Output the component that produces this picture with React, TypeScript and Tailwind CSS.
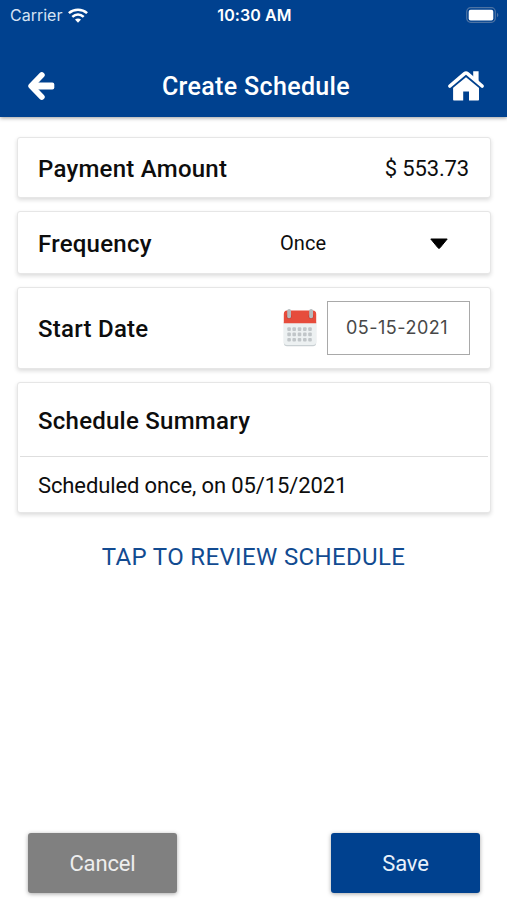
import type { ReactNode } from "react";

function Card({ className, children }: { className: string; children: ReactNode }) {
  return (
    <section
      className={`rounded-[3px] border border-[#e6e6e6] bg-white shadow-[0_2px_4px_rgba(0,0,0,0.14)] ${className}`}
    >
      {children}
    </section>
  );
}

function Label({ children }: { children: ReactNode }) {
  return <h2 className="pt-[2px] text-[24px] font-medium leading-7 tracking-[0.25px]">{children}</h2>;
}

function WifiIcon() {
  return (
    <svg width="20" height="15" viewBox="0 0 20 15" fill="none" stroke="white" strokeWidth="2.6">
      <path d="M.9 5.1C6 .6 14 .6 19.1 5.1" />
      <path d="M4.3 8.9c3.4-3 8-3 11.4 0" />
      <path d="M7 11.6c1.8-1.5 4.2-1.5 6 0L10 14.8z" fill="white" stroke="none" />
    </svg>
  );
}

function BatteryIcon() {
  return (
    <svg width="33" height="16" viewBox="0 0 33 16">
      <rect x=".7" y=".7" width="28.6" height="14.6" rx="4" fill="none" stroke="#4d73a3" strokeWidth="1.2" />
      <rect x="2.7" y="2.8" width="24.6" height="10.6" rx="2" fill="white" />
      <path d="M31 5.8c1.8.8 1.8 3.6 0 4.4z" fill="#4d73a3" />
    </svg>
  );
}

function BackIcon() {
  return (
    <svg width="28" height="30" viewBox="0 0 28 30" fill="white">
      <path d="M14.8 4 4.2 15l10.6 11" fill="none" stroke="white" strokeWidth="5.8" strokeLinecap="round" strokeLinejoin="round" />
      <path d="M5 15 11 9v12z" />
      <rect x="5" y="11.4" width="22.3" height="7.2" rx="2" />
    </svg>
  );
}

function HomeIcon() {
  return (
    <svg width="38" height="32" viewBox="0 0 38 32">
      <path d="M6.1 16 19 5.5 32 16v13.4c0 .8-.4 1.1-1.1 1.1h-8.9v-9h-5.8v9H7.2c-.7 0-1.1-.4-1.1-1.1z" fill="white" />
      <path d="M2.6 17 19 3.6 35.4 17" fill="none" stroke="#00418f" strokeWidth="5.6" />
      <path d="M26.2 1.3h5.4v12l-5.4-4.4z" fill="white" />
      <path d="M2.9 16 17.5 3.6c1-.8 2-.8 3 0L35.1 16" fill="none" stroke="white" strokeWidth="3.6" strokeLinecap="round" />
    </svg>
  );
}

const dotColumns = [6.1, 11.2, 16.5, 21.8, 27];
const dotRows = [20.1, 25.4, 30.7];

function CalendarIcon() {
  return (
    <svg width="34" height="38" viewBox="0 0 34 38">
      <path d="M.8 13h32.4v21c0 2-1.2 3.3-3.2 3.3H4C2 37.3.8 36 .8 34z" fill="#c9d0d3" />
      <path d="M.8 13h32.4v20c0 2-1.2 3-3.2 3H4c-2 0-3.2-1-3.2-3z" fill="#edf1f2" />
      <path d="M.8 14.3V5c0-2 1.2-3.4 3.2-3.4h26c2 0 3.2 1.4 3.2 3.4v9.3z" fill="#e64c3c" />
      <g fill="#bd3b32">
        <circle cx="6" cy="7.3" r="2.5" />
        <circle cx="28" cy="7.3" r="2.5" />
      </g>
      <g fill="#b4bbbd">
        <rect x="4.2" y=".1" width="3.8" height="9.2" rx="1.9" />
        <rect x="26.2" y=".1" width="3.8" height="9.2" rx="1.9" />
      </g>
      <g fill="#c1c6c9">
        {dotRows.map((y) =>
          dotColumns.map((x) => <rect key={`${x}-${y}`} x={x - 1.8} y={y - 1.8} width="3.6" height="3.6" rx="1" />)
        )}
      </g>
    </svg>
  );
}

function App() {
  return (
    <div className="flex h-[900px] w-[507px] flex-col bg-white font-[Roboto,sans-serif] text-[#0d0d0d]">
      <header className="h-[117px] shrink-0 bg-[#00418f] text-white shadow-[0_1px_4px_rgba(0,0,0,0.4)]">
        <div className="grid h-[30px] grid-cols-3 items-center pl-[10px] pr-[8px] font-[Inter,sans-serif]">
          <div className="flex items-center gap-[6px]">
            <span className="text-[16px] leading-5 text-[#d5e3f4]">Carrier</span>
            <WifiIcon />
          </div>
          <span className="text-center text-[16px] font-semibold leading-5 tracking-[0.1px]">10:30 AM</span>
          <div className="flex justify-end">
            <BatteryIcon />
          </div>
        </div>
        <div className="flex h-[87px] items-center justify-between pl-[27px] pr-[22px] pt-[25px]">
          <button aria-label="Back">
            <BackIcon />
          </button>
          <h1 className="pl-[10px] pt-[2px] text-[25px] font-medium leading-8 tracking-[0.35px]">Create Schedule</h1>
          <button aria-label="Home">
            <HomeIcon />
          </button>
        </div>
      </header>

      <main className="flex flex-col gap-[13px] pl-[17px] pr-[16px] pt-[20px]">
        <Card className="flex h-[61px] items-center justify-between pl-[20px] pr-[21px]">
          <Label>Payment Amount</Label>
          <span className="pt-[2px] text-[22px] tracking-[-0.15px]">$ 553.73</span>
        </Card>

        <Card className="flex h-[63px] items-center pl-[20px] pr-[42px]">
          <Label>Frequency</Label>
          <button className="ml-auto flex w-[168px] items-center justify-between text-[20px] tracking-[0.1px]">
            Once
            <svg className="mt-[2px]" width="18" height="11" viewBox="0 0 18 11">
              <path d="M.8 1h16.4L10 9.8c-.6.7-1.4.7-2 0z" fill="black" stroke="black" strokeLinejoin="round" />
            </svg>
          </button>
        </Card>

        <Card className="flex h-[82px] items-center pl-[20px] pr-[20px]">
          <Label>Start Date</Label>
          <div className="ml-auto flex items-center gap-[10px]">
            <CalendarIcon />
            <div className="flex h-[54px] w-[143px] items-center justify-center border border-[#a9a9a9] pb-[2px] pr-[3px] font-[Inter,sans-serif] text-[18px] tracking-[0.5px] text-[#484848]">
              05-15-2021
            </div>
          </div>
        </Card>

        <Card className="h-[131px] px-[2px]">
          <div className="flex h-[74px] items-center border-b border-[#dedede] pl-[18px]">
            <Label>Schedule Summary</Label>
          </div>
          <p className="pl-[18px] pt-[15px] text-[22px] leading-7 tracking-[-0.12px]">Scheduled once, on 05/15/2021</p>
        </Card>
      </main>

      <button className="mt-[30px] self-center text-[24px] leading-7 tracking-[0.35px] text-[#124b91]">
        TAP TO REVIEW SCHEDULE
      </button>

      <footer className="mt-auto flex justify-between pb-[7px] pl-[28px] pr-[27px] text-[22px] tracking-[-0.15px]">
        <button className="h-[60px] w-[149px] rounded-[3px] bg-[#808080] text-[#eee] shadow-[0_1px_4px_rgba(0,0,0,0.35)]">
          Cancel
        </button>
        <button className="h-[60px] w-[149px] rounded-[3px] bg-[#00418f] text-[#e8f1fb] shadow-[0_1px_4px_rgba(0,0,0,0.35)]">
          Save
        </button>
      </footer>
    </div>
  );
}

export default App;
